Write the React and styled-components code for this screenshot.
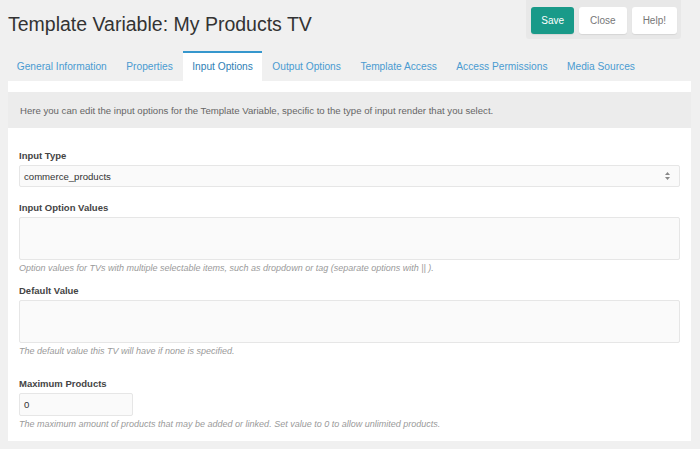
import React from "react";
import styled, { createGlobalStyle } from "styled-components";

const Global = createGlobalStyle`
  html, body { margin: 0; padding: 0; background: #f0f0f0; }
  body { font-family: "Liberation Sans", Arial, sans-serif; color: #555; }
`;

const Page = styled.div`
  width: 700px;
  height: 449px;
  padding: 0 9px 0 8px;
  box-sizing: border-box;
  overflow: hidden;
`;

const Header = styled.div`
  display: flex;
  justify-content: space-between;
  align-items: flex-start;
  height: 51px;
`;

const Title = styled.h1`
  margin: 12px 0 0 0;
  font-size: 19.5px;
  font-weight: normal;
  color: #333;
  line-height: 24px;
`;

const ButtonBar = styled.div`
  display: flex;
  gap: 5px;
  background: #e8e8e8;
  padding: 7px 4px 5px 5px;
  margin: 0 10px 0 0;
  border-radius: 0 0 3px 3px;
`;

const Button = styled.button`
  font-family: inherit;
  font-size: 10px;
  height: 27px;
  padding: 0 ${(p) => (p.$primary ? "10px" : "11px")};
  border: none;
  border-radius: 3px;
  background: ${(p) => (p.$primary ? "#199a89" : "#fff")};
  color: ${(p) => (p.$primary ? "#fff" : "#777")};
  box-shadow: 0 1px 1px rgba(0, 0, 0, 0.08);
  cursor: pointer;
`;

const Tabs = styled.div`
  display: flex;
  height: 30px;
`;

const Tab = styled.div`
  padding: 0 8.75px;
  margin-right: 2px;
  font-size: 10.2px;
  line-height: 28px;
  color: ${(p) => (p.$active ? "#2f7fb5" : "#4a9bd0")};
  background: ${(p) => (p.$active ? "#fff" : "transparent")};
  border-top: 2px solid ${(p) => (p.$active ? "#3697cd" : "transparent")};
`;

const Panel = styled.div`
  background: #fff;
  height: 360px;
  padding-top: 11px;
  box-sizing: border-box;
`;

const Description = styled.div`
  background: #ececec;
  height: 36px;
  padding: 0 12px;
  display: flex;
  align-items: center;
  font-size: 9.6px;
  color: #666;
`;

const Form = styled.div`
  padding: 22px 11px 0 11px;
  display: flex;
  flex-direction: column;
`;

const Field = styled.div`
  display: flex;
  flex-direction: column;
  margin-bottom: ${(p) => p.$mb || "0"};
`;

const Label = styled.label`
  font-size: 9.5px;
  font-weight: bold;
  color: #444;
  line-height: 12px;
  margin-bottom: 3px;
`;

const SelectBox = styled.div`
  height: 22px;
  border: 1px solid #e6e6e6;
  border-radius: 2px;
  background: #fafafa;
  box-sizing: border-box;
  display: flex;
  align-items: center;
  justify-content: space-between;
  padding: 0 8px 0 4px;
  font-size: 9.6px;
  color: #333;
`;

const TextArea = styled.div`
  height: 43px;
  border: 1px solid #e6e6e6;
  border-radius: 2px;
  background: #fafafa;
  box-sizing: border-box;
`;

const SmallInput = styled.div`
  width: 114px;
  height: 23px;
  border: 1px solid #e6e6e6;
  border-radius: 2px;
  background: #fafafa;
  box-sizing: border-box;
  display: flex;
  align-items: center;
  padding-left: 4px;
  font-size: 9.6px;
  color: #333;
`;

const Help = styled.div`
  font-size: 9px;
  font-style: italic;
  color: #9a9a9a;
  line-height: 12px;
  margin-top: 2px;
`;

const Arrows = () => (
  <svg width="7" height="10" viewBox="0 0 7 10">
    <path d="M3.5 1 L6 4 H1 Z" fill="#888" />
    <path d="M3.5 9 L6 6 H1 Z" fill="#888" />
  </svg>
);

const tabs = [
  "General Information",
  "Properties",
  "Input Options",
  "Output Options",
  "Template Access",
  "Access Permissions",
  "Media Sources",
];

export default function App() {
  return (
    <Page>
      <Global />
      <Header>
        <Title>Template Variable: My Products TV</Title>
        <ButtonBar>
          <Button $primary>Save</Button>
          <Button>Close</Button>
          <Button>Help!</Button>
        </ButtonBar>
      </Header>
      <Tabs>
        {tabs.map((t) => (
          <Tab key={t} $active={t === "Input Options"}>
            {t}
          </Tab>
        ))}
      </Tabs>
      <Panel>
        <Description>
          Here you can edit the input options for the Template Variable, specific to the type of input render that you select.
        </Description>
        <Form>
          <Field $mb="15px">
            <Label>Input Type</Label>
            <SelectBox>
              <span>commerce_products</span>
              <Arrows />
            </SelectBox>
          </Field>
          <Field $mb="11px">
            <Label>Input Option Values</Label>
            <TextArea />
            <Help>Option values for TVs with multiple selectable items, such as dropdown or tag (separate options with || ).</Help>
          </Field>
          <Field $mb="21px">
            <Label>Default Value</Label>
            <TextArea />
            <Help>The default value this TV will have if none is specified.</Help>
          </Field>
          <Field>
            <Label>Maximum Products</Label>
            <SmallInput>0</SmallInput>
            <Help>The maximum amount of products that may be added or linked. Set value to 0 to allow unlimited products.</Help>
          </Field>
        </Form>
      </Panel>
    </Page>
  );
}
